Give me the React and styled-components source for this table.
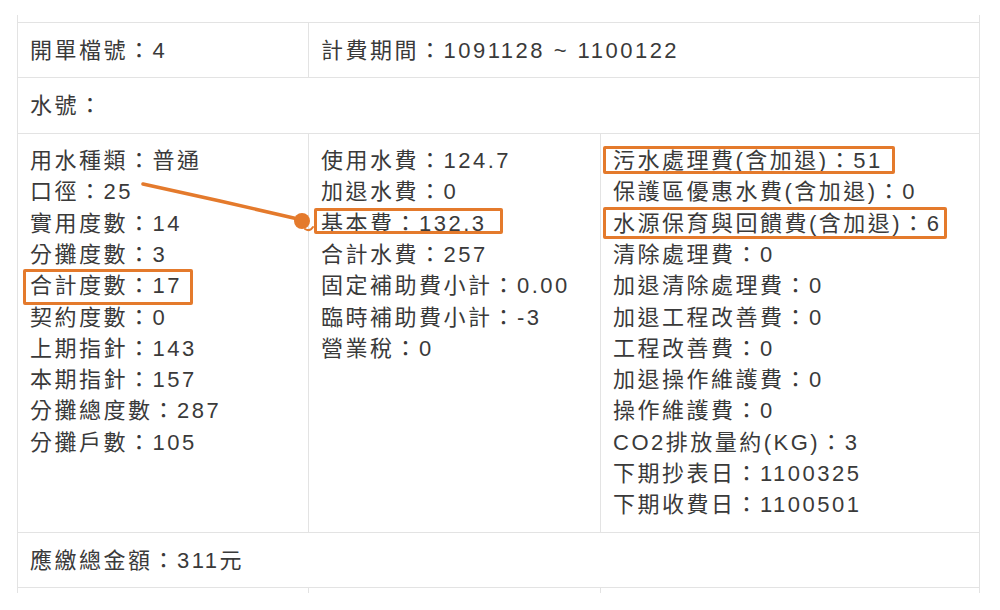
import React from 'react'
import styled, { createGlobalStyle } from 'styled-components'

const GlobalStyle = createGlobalStyle`
  html, body {
    margin: 0;
    background: #ffffff;
  }
  body {
    width: 1000px;
    height: 610px;
    overflow: hidden;
  }
`

const LINE = '#e3e3e3'
const ORANGE = '#e47a2c'

const Page = styled.div`
  position: relative;
  width: 1000px;
  height: 610px;
  box-sizing: border-box;
  padding: 15px 0 0 17px;
  font-family: "Liberation Sans", "Noto Sans CJK TC", sans-serif;
  color: #3a3a3a;
`

const Clip = styled.div`
  width: 963px;
  height: 578px;
  overflow: hidden;
`

const Grid = styled.div`
  display: grid;
  grid-template-columns: 291px 292px 379px;
  border-left: 1px solid ${LINE};
`

const Stub = styled.div`
  grid-column: ${(p) => p.$span || 'auto'};
  height: ${(p) => p.$h}px;
  border-right: 1px solid ${LINE};
  border-bottom: ${(p) => (p.$closed ? `1px solid ${LINE}` : 'none')};
`

const Cell = styled.div`
  grid-column: ${(p) => p.$span || 'auto'};
  padding: 11.5px 12px;
  border-right: 1px solid ${LINE};
  border-bottom: 1px solid ${LINE};
  font-size: 22px;
  line-height: 31.3px;
  letter-spacing: 2.5px;
  white-space: nowrap;
`

const Line = styled.div`
  height: 31.3px;
`

const Mark = styled.span`
  position: relative;
  display: inline-block;
  height: 31.3px;

  &::after {
    content: '';
    position: absolute;
    top: ${(p) => p.$t}px;
    bottom: ${(p) => p.$b}px;
    left: -${(p) => p.$l}px;
    right: -${(p) => p.$r}px;
    border: 3px solid ${ORANGE};
    border-radius: 2px;
  }
`

const Overlay = styled.svg`
  position: absolute;
  top: 0;
  left: 0;
  pointer-events: none;
`

const usage = [
  '用水種類：普通',
  '口徑：25',
  '實用度數：14',
  '分攤度數：3',
  { text: '合計度數：17', box: { t: -1, b: -3, l: 7, r: 11 } },
  '契約度數：0',
  '上期指針：143',
  '本期指針：157',
  '分攤總度數：287',
  '分攤戶數：105',
]

const fees = [
  '使用水費：124.7',
  '加退水費：0',
  { text: '基本費：132.3', box: { t: 0, b: 5, l: 7, r: 16 } },
  '合計水費：257',
  '固定補助費小計：0.00',
  '臨時補助費小計：-3',
  '營業稅：0',
]

const others = [
  { text: '污水處理費(含加退)：51', box: { t: 1, b: 2, l: 10, r: 12 } },
  '保護區優惠水費(含加退)：0',
  { text: '水源保育與回饋費(含加退)：6', box: { t: -1, b: 0, l: 10, r: 6 } },
  '清除處理費：0',
  '加退清除處理費：0',
  '加退工程改善費：0',
  '工程改善費：0',
  '加退操作維護費：0',
  '操作維護費：0',
  'CO2排放量約(KG)：3',
  '下期抄表日：1100325',
  '下期收費日：1100501',
]

const Lines = ({ items }) =>
  items.map((item, i) => {
    if (typeof item === 'string') return <Line key={i}>{item}</Line>
    const { t, b, l, r } = item.box
    return (
      <Line key={i}>
        <Mark $t={t} $b={b} $l={l} $r={r}>{item.text}</Mark>
      </Line>
    )
  })

const App = () => {
  return (
    <>
      <GlobalStyle />
      <Page>
        <Clip>
          <Grid>
            <Stub $span="1 / -1" $h={7} $closed />
            <Cell>開單檔號：4</Cell>
            <Cell $span="2 / 4">計費期間：1091128 ~ 1100122</Cell>
            <Cell $span="1 / -1">水號：</Cell>
            <Cell><Lines items={usage} /></Cell>
            <Cell><Lines items={fees} /></Cell>
            <Cell><Lines items={others} /></Cell>
            <Cell $span="1 / -1">應繳總金額：311元</Cell>
            <Stub $h={12} />
            <Stub $h={12} />
            <Stub $h={12} />
          </Grid>
        </Clip>
        <Overlay width="1000" height="610" viewBox="0 0 1000 610">
          <path
            d="M143 184 L220 201 L298 219"
            fill="none"
            stroke={ORANGE}
            strokeWidth="3.5"
            strokeLinecap="round"
          />
          <circle cx="302" cy="221" r="8" fill={ORANGE} />
          <path
            d="M305 229 q5 3 8 -2"
            fill="none"
            stroke={ORANGE}
            strokeWidth="2"
            strokeLinecap="round"
          />
        </Overlay>
      </Page>
    </>
  )
}

export default App
